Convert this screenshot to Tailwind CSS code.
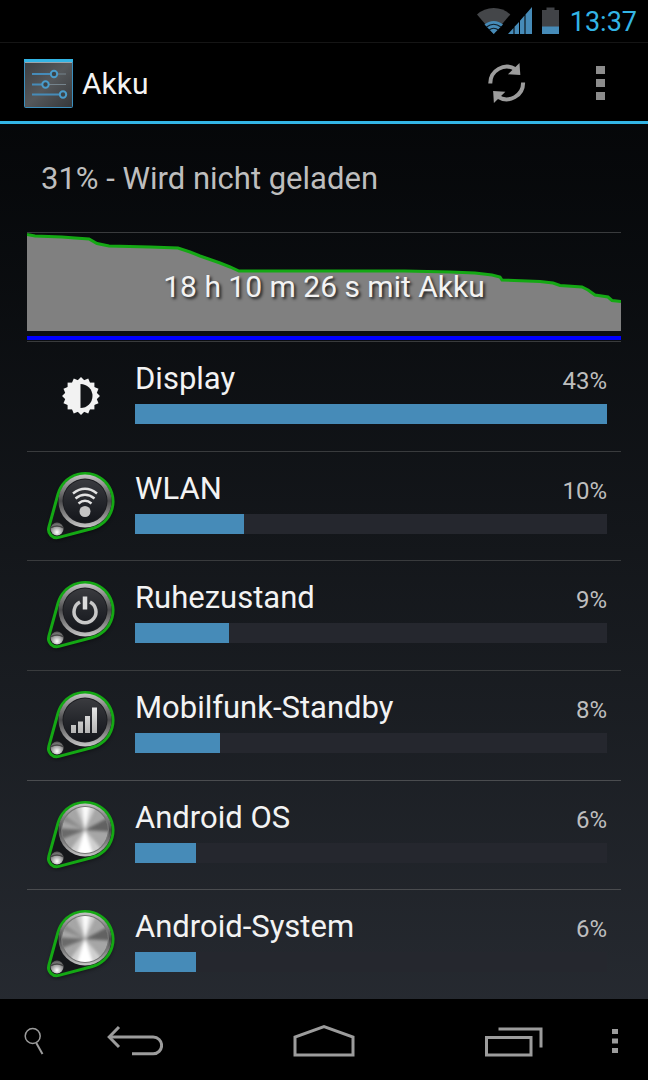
<!DOCTYPE html>
<html lang="de">
  <head>
    <meta charset="UTF-8" />
    <meta name="viewport" content="width=device-width, initial-scale=1.0" />
    <title>Akku</title>
    <script src="https://cdn.jsdelivr.net/npm/@tailwindcss/browser@4"></script>
  </head>
  <body
    class="flex min-h-screen flex-col bg-linear-to-b from-[#030405] to-[#292d34] font-[Roboto,sans-serif] text-[#f3f3f3]"
  >
    <!-- Shared icon parts -->
    <svg class="absolute h-0 w-0" aria-hidden="true">
      <defs>
        <linearGradient id="rim" x1="0" y1="0" x2="0" y2="1">
          <stop offset="0" stop-color="#c4c4c4" />
          <stop offset="0.25" stop-color="#858585" />
          <stop offset="0.5" stop-color="#4a4a4c" />
          <stop offset="0.75" stop-color="#858585" />
          <stop offset="1" stop-color="#c8c8c8" />
        </linearGradient>
        <linearGradient id="face" x1="0" y1="0" x2="0" y2="1">
          <stop offset="0" stop-color="#3a3b3f" />
          <stop offset="0.55" stop-color="#23252a" />
          <stop offset="1" stop-color="#14161b" />
        </linearGradient>
        <radialGradient id="bead" cx="0.5" cy="0.75" r="0.7">
          <stop offset="0" stop-color="#ffffff" />
          <stop offset="0.45" stop-color="#b5b5b5" />
          <stop offset="1" stop-color="#5c5c5c" />
        </radialGradient>
        <linearGradient id="glyph" x1="0" y1="0" x2="0" y2="1">
          <stop offset="0" stop-color="#e8e8e8" />
          <stop offset="1" stop-color="#b4b4b4" />
        </linearGradient>
        <filter id="soft"><feGaussianBlur stdDeviation="1.6" /></filter>
        <filter id="shade"><feGaussianBlur stdDeviation="2" /></filter>
        <clipPath id="disc"><circle cx="40" cy="32" r="23" /></clipPath>
        <path
          id="drop"
          d="M13 25.2A28 28 0 1 1 47.3 59.5L13.9 68.4A8.2 8.2 0 0 1 3.8 58.4Z"
        />
      </defs>
      <symbol id="knob" viewBox="0 0 72 74">
        <use href="#drop" y="2" fill="#000" opacity="0.6" filter="url(#shade)" />
        <use href="#drop" fill="#15171a" stroke="#14a814" stroke-width="3" />
        <circle cx="40" cy="32" r="26.5" fill="url(#rim)" />
        <circle cx="40" cy="32" r="22.5" fill="#1b1c20" />
        <circle cx="40" cy="32" r="21.5" fill="url(#face)" />
        <circle cx="12" cy="60" r="6.5" fill="url(#bead)" />
        <path d="M6 58.5q6-3 12 0" stroke="#444" stroke-width="1.5" fill="none" />
      </symbol>
      <symbol id="metal" viewBox="0 0 72 74">
        <use href="#drop" y="2" fill="#000" opacity="0.6" filter="url(#shade)" />
        <use href="#drop" fill="#15171a" stroke="#14a814" stroke-width="3" />
        <circle cx="40" cy="32" r="26.5" fill="url(#rim)" />
        <circle cx="40" cy="32" r="24" fill="#777" />
        <g clip-path="url(#disc)">
          <circle cx="40" cy="32" r="23" fill="#a6a6a6" />
          <g filter="url(#soft)">
            <path d="M40 32L28 2H54Z" fill="#cfcfcf" />
            <path d="M40 32L36 2H46Z" fill="#fafafa" />
            <path d="M40 32L70 16V34Z" fill="#626262" />
            <path d="M40 32L10 30V44Z" fill="#6a6a6a" />
            <path d="M40 32L18 62H66Z" fill="#d0d0d0" />
            <path d="M40 32L30 62H50Z" fill="#ffffff" />
            <path d="M40 32L10 10V20Z" fill="#8a8a8a" />
          </g>
        </g>
        <circle cx="12" cy="60" r="6.5" fill="url(#bead)" />
        <path d="M6 58.5q6-3 12 0" stroke="#444" stroke-width="1.5" fill="none" />
      </symbol>
    </svg>

    <!-- Status bar -->
    <div
      class="flex h-[43px] items-center justify-end border-b border-[#151515] bg-black pr-[11px]"
    >
      <svg class="h-7 w-[34px]" viewBox="0 0 34 28" fill="none">
        <path d="M16.7 27L0 7.5Q7 1 16.7 1T33.3 7.5Z" fill="#444649" />
        <path d="M16.7 27L7.5 17.5Q11.5 14 16.7 14T26 17.5Z" fill="#468bb8" />
        <path d="M9.5 20Q16.7 14.5 24 20M12 23Q16.7 19.5 21.5 23" stroke="#101c26" stroke-width="1.2" />
      </svg>
      <svg class="-ml-[3px] h-7 w-6" viewBox="0 0 24 28" fill="#468bb8">
        <path d="M0 27L5.500 21V27ZM6.500 27V19.800L11 15V27ZM12 27V13.700L16.500 8.500V27ZM17.500 27V7.500L24 0V27Z" />
      </svg>
      <svg class="ml-[10px] h-7 w-[17px]" viewBox="0 0 17 28">
        <path d="M0 3H4.500V0.500H12.500V3H17V27H0Z" fill="#414347" />
        <path d="M0 19.500H17V27H0Z" fill="#468bb8" />
      </svg>
      <time class="ml-[11px] pt-[2px] text-[27px] leading-8 text-[#33b5e5]">13:37</time>
    </div>

    <!-- Action bar -->
    <header
      class="flex h-[81px] items-center border-b-3 border-[#33b5e5] bg-black pt-[2px] pr-[43px] pl-6"
    >
      <svg class="h-[49px] w-[49px]" viewBox="0 0 49 49" fill="none">
        <defs>
          <linearGradient id="panel" x1="0" y1="0" x2="1" y2="1">
            <stop offset="0" stop-color="#3b3d40" />
            <stop offset="0.5" stop-color="#55585b" />
            <stop offset="1" stop-color="#35373a" />
          </linearGradient>
        </defs>
        <rect x="0.500" y="0.500" width="48" height="48" rx="1" fill="url(#panel)" stroke="#3b8fbe" />
        <path d="M0 1.500H49" stroke="#33b5e5" stroke-width="3" />
        <path d="M1 3.500H48" stroke="#9aa5ab" />
        <path d="M8 15H42M8 25.500H42M8 35.500H42" stroke="#75838c" />
        <path d="M8 15H27M8 25.500H18M8 35.500H36" stroke="#468bb8" stroke-width="2" />
        <g fill="#3c4347" stroke="#4a9ccb" stroke-width="2">
          <circle cx="30" cy="15" r="3.200" />
          <circle cx="21.500" cy="25.500" r="3.200" />
          <circle cx="39" cy="35.500" r="3.200" />
        </g>
      </svg>
      <h1 class="ml-[9px] flex-1 pt-[2px] text-[30px] leading-9">Akku</h1>
      <button type="button" aria-label="Aktualisieren">
        <svg class="h-[42px] w-[38px]" viewBox="0 0 38 42" fill="none">
          <g id="sweep">
            <path d="M2.300 21.500A16.500 16.500 0 0 1 27.500 7.200" stroke="#9c9c9c" stroke-width="4" />
            <path d="M31.500 1L32.300 13L20 12.300Z" fill="#9c9c9c" />
          </g>
          <use href="#sweep" transform="rotate(180 18.700 21)" />
        </svg>
      </button>
      <button type="button" aria-label="Weitere Optionen" class="ml-[70px]">
        <svg class="h-[34px] w-[9px]" viewBox="0 0 9 34" fill="#8c8c8c">
          <path d="M0 0H9V8H0ZM0 13H9V21H0ZM0 26H9V34H0Z" />
        </svg>
      </button>
    </header>

    <main class="flex flex-1 flex-col px-[27px]">
      <p class="pt-[37px] pb-[35px] pl-[14px] text-[31px] leading-9 text-[#bebebe]">
        31% - Wird nicht geladen
      </p>

      <!-- Battery history -->
      <section class="relative border-t border-[#393b3d]">
        <svg
          class="h-[108px] w-full"
          viewBox="0 0 594 108"
          preserveAspectRatio="none"
          fill="none"
        >
          <path
            d="M0 1.500L8 3 35 4 48 5 62 6 70 10.500 82 13 123 14 151 15 163 19 173 23 183 26.500 193 30 203 34 212 38H378L423 39 448 40 465 42 473 44 475 47 513 48.500 526 50 533 52.500 555 54 561 57 568 62 581 64 585 67.500 594 68.500V98H0Z"
            fill="#808080"
          />
          <path
            d="M0 1.500L8 3 35 4 48 5 62 6 70 10.500 82 13 123 14 151 15 163 19 173 23 183 26.500 193 30 203 34 212 38H378L423 39 448 40 465 42 473 44 475 47 513 48.500 526 50 533 52.500 555 54 561 57 568 62 581 64 585 67.500 594 68.500"
            stroke="#14a814"
            stroke-width="3"
          />
          <path d="M0 105H594" stroke="#0000ff" stroke-width="4" />
        </svg>
        <p
          class="absolute inset-x-0 top-9 text-center text-[30px] leading-9 text-shadow-[2px_2px_3px_#202020]"
        >
          18 h 10 m 26 s mit Akku
        </p>
      </section>

      <!-- Consumers -->
      <ul class="grid flex-1 auto-rows-fr">
        <li class="flex border-t border-[#393b3d] pr-[14px]">
          <svg class="mx-[18px] mt-[17px] h-[74px] w-[72px]" viewBox="0 0 72 74">
            <g fill="#f2f2f2">
              <rect id="tooth" x="22.600" y="23.600" width="26.800" height="26.800" />
              <use href="#tooth" transform="rotate(22.500 36 37)" />
              <use href="#tooth" transform="rotate(45 36 37)" />
              <use href="#tooth" transform="rotate(67.500 36 37)" />
            </g>
            <path d="M35.500 25A12 12 0 0 1 35.500 49Z" fill="#121417" />
          </svg>
          <div class="flex-1">
            <div class="flex items-end justify-between pt-[19px]">
              <h2 class="text-[31px] leading-9">Display</h2>
              <span class="text-2xl text-[#bebebe]">43%</span>
            </div>
            <div class="mt-[7px] h-5 bg-[#25272e]">
              <div class="h-full bg-[#468bb8]" style="width: 100%"></div>
            </div>
          </div>
        </li>
        <li class="flex border-t border-[#393b3d] pr-[14px]">
          <svg class="mx-[18px] mt-[17px] h-[74px] w-[72px]" viewBox="0 0 72 74" fill="none">
            <use href="#knob" />
            <circle cx="40" cy="42.500" r="5.500" fill="#c4c4c4" />
            <path d="M28 24.500Q40 15 52 24.500M30.500 29.500Q40 22 49.500 29.500M33.500 34.500Q40 29 46.500 34.500" stroke="#e2e2e2" stroke-width="2.500" />
          </svg>
          <div class="flex-1">
            <div class="flex items-end justify-between pt-[19px]">
              <h2 class="text-[31px] leading-9">WLAN</h2>
              <span class="text-2xl text-[#bebebe]">10%</span>
            </div>
            <div class="mt-[7px] h-5 bg-[#25272e]">
              <div class="h-full bg-[#468bb8]" style="width: 23%"></div>
            </div>
          </div>
        </li>
        <li class="flex border-t border-[#393b3d] pr-[14px]">
          <svg class="mx-[18px] mt-[17px] h-[74px] w-[72px]" viewBox="0 0 72 74" fill="none">
            <use href="#knob" />
            <path d="M35 24A11 11 0 1 0 45 24" stroke="#c8c8c8" stroke-width="3.500" />
            <path d="M40 18.500V31.500" stroke="#dcdcdc" stroke-width="4.500" />
          </svg>
          <div class="flex-1">
            <div class="flex items-end justify-between pt-[19px]">
              <h2 class="text-[31px] leading-9">Ruhezustand</h2>
              <span class="text-2xl text-[#bebebe]">9%</span>
            </div>
            <div class="mt-[7px] h-5 bg-[#25272e]">
              <div class="h-full bg-[#468bb8]" style="width: 20%"></div>
            </div>
          </div>
        </li>
        <li class="flex border-t border-[#393b3d] pr-[14px]">
          <svg class="mx-[18px] mt-[17px] h-[74px] w-[72px]" viewBox="0 0 72 74">
            <use href="#knob" />
            <path d="M26 37H31V45H26ZM33 33.500H38V45H33ZM40 28H45V45H40ZM47 19.500H52V45H47Z" fill="url(#glyph)" />
          </svg>
          <div class="flex-1">
            <div class="flex items-end justify-between pt-[19px]">
              <h2 class="text-[31px] leading-9">Mobilfunk-Standby</h2>
              <span class="text-2xl text-[#bebebe]">8%</span>
            </div>
            <div class="mt-[7px] h-5 bg-[#25272e]">
              <div class="h-full bg-[#468bb8]" style="width: 18%"></div>
            </div>
          </div>
        </li>
        <li class="flex border-t border-[#4a4c4f] pr-[14px]">
          <svg class="mx-[18px] mt-[17px] h-[74px] w-[72px]" viewBox="0 0 72 74">
            <use href="#metal" />
          </svg>
          <div class="flex-1">
            <div class="flex items-end justify-between pt-[19px]">
              <h2 class="text-[31px] leading-9">Android OS</h2>
              <span class="text-2xl text-[#bebebe]">6%</span>
            </div>
            <div class="mt-[7px] h-5 bg-[#25272e]">
              <div class="h-full bg-[#468bb8]" style="width: 13%"></div>
            </div>
          </div>
        </li>
        <li class="flex border-t border-[#4a4c4f] pr-[14px]">
          <svg class="mx-[18px] mt-[17px] h-[74px] w-[72px]" viewBox="0 0 72 74">
            <use href="#metal" />
          </svg>
          <div class="flex-1">
            <div class="flex items-end justify-between pt-[19px]">
              <h2 class="text-[31px] leading-9">Android-System</h2>
              <span class="text-2xl text-[#bebebe]">6%</span>
            </div>
            <div class="mt-[7px] h-5 bg-[#25272e]">
              <div class="h-full bg-[#468bb8]" style="width: 13%"></div>
            </div>
          </div>
        </li>
      </ul>
    </main>

    <!-- Navigation bar -->
    <nav class="flex h-[81px] items-center bg-black pt-[3px] pr-[30px] pl-6 text-[#9c9c9c]">
      <button type="button" aria-label="Suche">
        <svg class="h-7 w-5" viewBox="0 0 20 28" fill="none" stroke="currentColor" stroke-width="1.500">
          <circle cx="8.700" cy="9" r="7.500" />
          <path d="M12.300 16L18.500 27" stroke-width="2" />
        </svg>
      </button>
      <div class="mr-[69px] ml-[63px] flex flex-1 items-center justify-between">
        <button type="button" aria-label="Zurück">
          <svg class="h-8 w-14" viewBox="0 0 56 32" fill="none" stroke="currentColor" stroke-width="3">
            <path d="M2.500 12H46.200A8.400 8.400 0 0 1 46.200 28.800H25" />
            <path d="M12 2L2.200 12L12 22" />
          </svg>
        </button>
        <button type="button" aria-label="Startseite">
          <svg class="h-8 w-[62px]" viewBox="0 0 62 32" fill="none" stroke="currentColor" stroke-width="3">
            <path d="M2 30V12L31 1.700L60 12V30Z" />
          </svg>
        </button>
        <button type="button" aria-label="Letzte Apps">
          <svg class="h-8 w-[58px]" viewBox="0 0 58 32" fill="none" stroke="currentColor" stroke-width="3">
            <rect x="1.500" y="12.500" width="44.500" height="17.500" />
            <path d="M13.500 4H56V22.500" />
          </svg>
        </button>
      </div>
      <button type="button" aria-label="Menü">
        <svg class="h-6 w-[6px]" viewBox="0 0 6 24" fill="currentColor">
          <path d="M0 0H6V5H0ZM0 9.500H6V14.500H0ZM0 19H6V24H0Z" />
        </svg>
      </button>
    </nav>
  </body>
</html>
